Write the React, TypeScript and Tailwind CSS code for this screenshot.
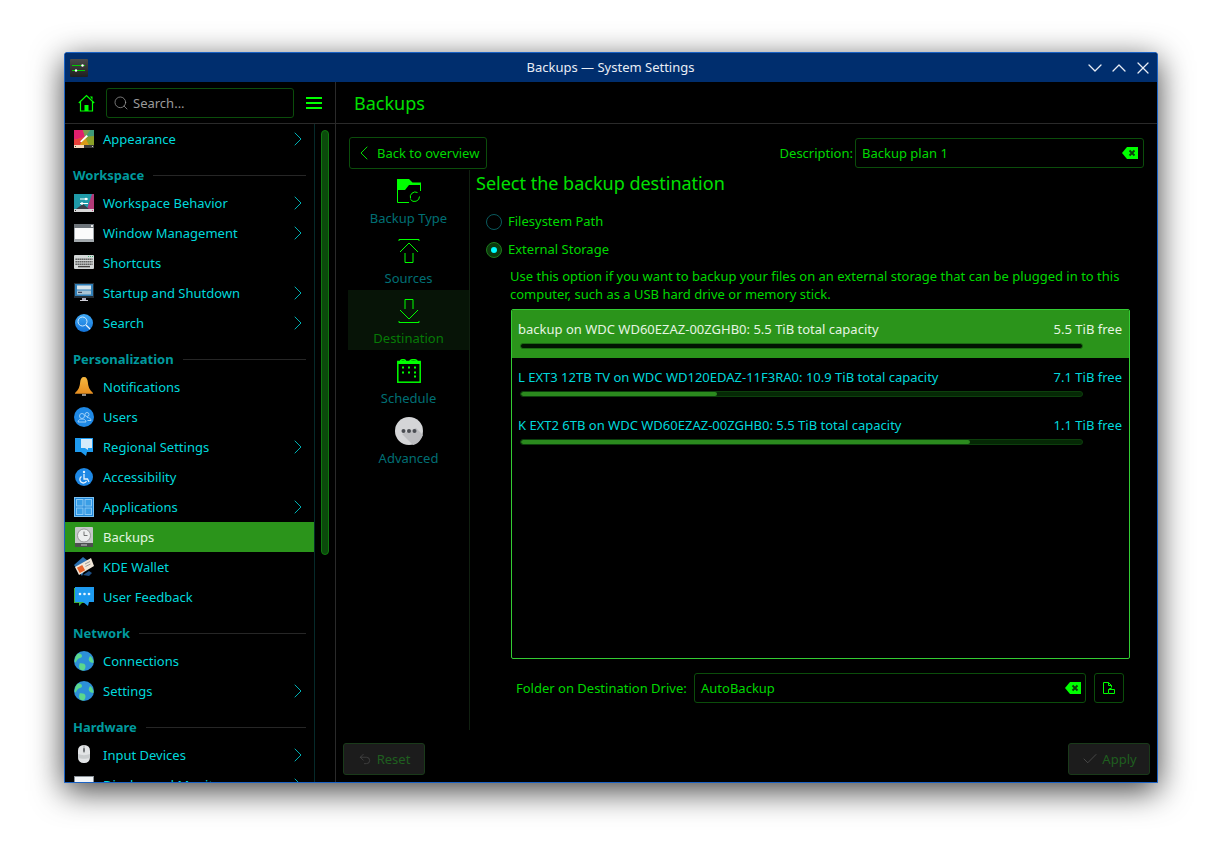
import type { ReactNode } from 'react'
import { ChevronLeft, ChevronRight, ChevronDown, ChevronUp, X, Search, Check, Undo2 } from 'lucide-react'

const FONT = "font-['Noto_Sans','Open_Sans',sans-serif]"

function IconBox({ children }: { children: ReactNode }) {
  return (
    <svg width="20" height="20" viewBox="0 0 20 20" className="shrink-0">
      {children}
    </svg>
  )
}

function AppearanceIcon() {
  return (
    <IconBox>
      <rect x="0" y="1" width="20" height="15" fill="#b8a020" />
      <path d="M0 1h9l2 7-11 3z" fill="#e0206e" />
      <path d="M0 11l11-3-5 8H0z" fill="#e8403a" />
      <path d="M6 16l5-8 4 8z" fill="#d89a18" />
      <path d="M15 16l-4-8 9-1v9z" fill="#8aa028" />
      <path d="M9 1h7l-5 7z" fill="#7a9a50" />
      <path d="M16 1h4v6l-9 1z" fill="#3f9a78" />
      <rect x="0" y="16" width="10" height="3" fill="#f6d8bc" />
      <rect x="10" y="16" width="10" height="3" fill="#3a3a3a" />
      <rect x="1" y="17" width="1" height="1" fill="#444" />
      <rect x="18" y="17" width="1" height="1" fill="#ccc" />
      <path d="M6 12.500l6.500-6.500 1.500 1.300-6.500 6z" fill="#fff" />
    </IconBox>
  )
}

function BehaviorIcon() {
  return (
    <IconBox>
      <rect x="0" y="1" width="20" height="15" fill="#1f9aa8" />
      <path d="M20 1v15h-7L18 1z" fill="#b33a78" />
      <path d="M2 16l7-5 6 5z" fill="#3a3d48" />
      <rect x="0" y="16" width="20" height="3" fill="#d8d8d8" />
      <rect x="1" y="17" width="1" height="1" fill="#333" />
      <rect x="18" y="17" width="1" height="1" fill="#d04a8a" />
      <path d="M6 6h8M6 10.500h8" stroke="#fff" strokeWidth="1" />
      <circle cx="12" cy="6" r="1.300" fill="#fff" />
      <circle cx="8" cy="10.500" r="1.300" fill="#fff" />
    </IconBox>
  )
}

function WindowIcon() {
  return (
    <IconBox>
      <rect x="0" y="1" width="20" height="18" fill="#a3a9ad" />
      <rect x="0" y="1" width="20" height="4" fill="#6d747a" />
      <rect x="17" y="2" width="2" height="2" fill="#e8e8e8" />
      <rect x="1" y="5" width="18" height="11" fill="#fbfbfb" />
    </IconBox>
  )
}

function KeyboardIcon() {
  return (
    <IconBox>
      <rect x="0" y="2" width="20" height="14" rx="1" fill="#d3d7d7" />
      <rect x="14" y="3" width="1" height="1" fill="#3cb371" />
      <rect x="16" y="3" width="1" height="1" fill="#3cb371" />
      <rect x="18" y="3" width="1" height="1" fill="#3cb371" />
      <path d="M1.500 6.200h17M1.500 8.700h17M1.500 11.200h17" stroke="#444" strokeWidth="1.400" strokeDasharray="1.300 .7" />
      <path d="M4 13.600h12" stroke="#444" strokeWidth="1.400" />
    </IconBox>
  )
}

function MonitorIcon() {
  return (
    <IconBox>
      <rect x="0" y="0" width="20" height="15" fill="#232c34" />
      <rect x="1" y="1" width="18" height="12" fill="#2f7fb8" />
      <rect x="3" y="2.500" width="14" height="4" fill="#d8e4ea" />
      <rect x="3" y="7.500" width="14" height="4" fill="#a9c4d4" />
      <rect x="4" y="8.800" width="4" height="1.200" fill="#445" />
      <rect x="8" y="15" width="4" height="2" fill="#aab" />
      <rect x="6" y="17" width="8" height="1" fill="#d0d0d8" />
    </IconBox>
  )
}

function SearchBadge() {
  return (
    <IconBox>
      <defs>
        <linearGradient id="sb" x1="0" y1="0" x2="0" y2="1">
          <stop offset="0" stopColor="#3ea8f5" />
          <stop offset="1" stopColor="#1272d8" />
        </linearGradient>
      </defs>
      <circle cx="10" cy="10" r="9" fill="url(#sb)" />
      <circle cx="8.500" cy="8.500" r="4.500" fill="none" stroke="#cfe9fc" strokeWidth="1" />
      <path d="M12 12l4 4" stroke="#e8f5ff" strokeWidth="1.300" />
    </IconBox>
  )
}

function BellIcon() {
  return (
    <IconBox>
      <defs>
        <linearGradient id="bl" x1="0" y1="0" x2="0" y2="1">
          <stop offset="0" stopColor="#f5b840" />
          <stop offset="1" stopColor="#e88f20" />
        </linearGradient>
      </defs>
      <path d="M10 0c-2.500 0-3.500 2-3.800 5-.3 4-1.500 8-5.200 11h18c-3.700-3-4.900-7-5.200-11C13.500 2 12.500 0 10 0z" fill="url(#bl)" />
      <rect x="1" y="16" width="18" height="1" fill="#a86a1c" />
      <rect x="8" y="17" width="4" height="2" fill="#8d8d8d" />
    </IconBox>
  )
}

function UsersIcon() {
  return (
    <IconBox>
      <circle cx="10" cy="10" r="10" fill="#1e88e5" />
      <circle cx="8" cy="9" r="2.500" fill="none" stroke="#9dd0f8" strokeWidth="1" />
      <circle cx="13" cy="7.500" r="2" fill="none" stroke="#9dd0f8" strokeWidth="1" />
      <path d="M4 15c0-2 2-3 4-3s4 1 4 3zM13 10.500c2 0 4 .8 4 3h-3.500" fill="none" stroke="#9dd0f8" strokeWidth="1" />
    </IconBox>
  )
}

function BubbleIcon() {
  return (
    <IconBox>
      <path d="M1 1h18v14h-6l-1 4-5-4H1z" fill="#1e9bf0" />
      <rect x="7" y="2" width="11" height="9" fill="#d6ebfa" />
      <path d="M11 11h3v2z" fill="#d6ebfa" />
    </IconBox>
  )
}

function AccessIcon() {
  return (
    <IconBox>
      <circle cx="10" cy="10" r="9" fill="#1e88e5" />
      <circle cx="10" cy="5" r="1.200" fill="#e6f3fd" />
      <path d="M10 7v5h3.500l1.500 3M7.500 9.500a3.500 3.500 0 1 0 5 4.500" fill="none" stroke="#e6f3fd" strokeWidth="1.300" />
    </IconBox>
  )
}

function AppsIcon() {
  return (
    <IconBox>
      <rect x="0" y="0" width="20" height="20" fill="#7cc2f2" />
      <rect x="1" y="1" width="18" height="18" fill="#1f86d8" />
      <rect x="2.500" y="2.500" width="6.500" height="6.500" fill="#3a9ee6" stroke="#8ccaf5" strokeWidth="1" />
      <rect x="11" y="2.500" width="6.500" height="6.500" fill="#3a9ee6" stroke="#8ccaf5" strokeWidth="1" />
      <rect x="2.500" y="11" width="6.500" height="6.500" fill="#3a9ee6" stroke="#8ccaf5" strokeWidth="1" />
      <rect x="11" y="11" width="6.500" height="6.500" fill="#3a9ee6" stroke="#8ccaf5" strokeWidth="1" />
    </IconBox>
  )
}

function DriveIcon() {
  return (
    <IconBox>
      <rect x="1" y="0" width="18" height="20" rx="1" fill="#c4c8c8" />
      <rect x="1" y="16" width="18" height="4" fill="#4d4f4f" />
      <circle cx="10" cy="8.500" r="6.500" fill="#eceeee" stroke="#808080" strokeWidth=".7" />
      <path d="M10 4.500v4h3.500" fill="none" stroke="#555" strokeWidth=".8" />
      <rect x="7" y="17.500" width="6" height="1" fill="#ccc" />
    </IconBox>
  )
}

function WalletIcon() {
  return (
    <IconBox>
      <path d="M0 8L9 0l5 4-6 15z" fill="#2a6fb0" />
      <path d="M15 14l3 2-3 3-6-1z" fill="#1c4f85" />
      <path d="M1 10L17 1l3 8L5 18z" fill="#f0e6d8" />
      <rect x="4" y="9" width="6" height="6" transform="rotate(-28 7 12)" fill="#e8642c" />
      <path d="M11 7l5-2.500M11.500 9.500l5-2.500" stroke="#888" strokeWidth=".8" />
    </IconBox>
  )
}

function FeedbackIcon() {
  return (
    <IconBox>
      <path d="M0 1h14v15H8l-3 3v-3H0z" fill="#3fae3f" />
      <path d="M1 0h19v15h-5l-1 4-5-4H1z" fill="#1e9bf0" />
      <circle cx="6" cy="7" r="1.300" fill="#e8f5ff" />
      <circle cx="10.500" cy="7" r="1.300" fill="#e8f5ff" />
      <circle cx="15" cy="7" r="1.300" fill="#e8f5ff" />
    </IconBox>
  )
}

function GlobeIcon() {
  return (
    <IconBox>
      <circle cx="10" cy="10" r="10" fill="#2c8fd8" />
      <path d="M4 2.500c2 0 4 .5 4 2.500s-2 1.500-4 3-1.500 4-3 3.500C0 10 1 5 4 2.500zM16 5c2 1 3.500 4 3.500 7l-2.500-.5c-1.500-1-3-2.500-2-4.500zM5.500 12.500c2-.5 6 0 6 2.500s-1 4.500-3 4.500c-1 0-3-1-3.500-3.500z" fill="#5cd88c" />
    </IconBox>
  )
}

function MouseIcon() {
  return (
    <IconBox>
      <rect x="4" y="0" width="12" height="18" rx="5.500" fill="#e2e4e6" />
      <path d="M10 0v8" stroke="#8a8d90" strokeWidth=".8" />
      <rect x="9" y="3" width="2" height="4" rx="1" fill="#6d7073" />
      <path d="M4 9c4 1.500 8 1.500 12 0v4c-3 1-9 1-12 0z" fill="#c9ccce" />
    </IconBox>
  )
}

function DisplayIcon() {
  return (
    <IconBox>
      <rect x="0" y="1" width="20" height="15" fill="#8a9198" />
      <rect x="1" y="2" width="18" height="13" fill="#f2f5f8" />
    </IconBox>
  )
}

function ClearIcon() {
  return (
    <svg width="16" height="12" viewBox="0 0 16 12" className="shrink-0">
      <path d="M5 0h11v12H5L0 6z" fill="#00ff00" />
      <path d="M7.500 3.500l5 5M12.500 3.500l-5 5" stroke="#0c3a0c" strokeWidth="1.800" />
    </svg>
  )
}

function SideRow({ icon, label, more, active }: { icon: ReactNode; label: string; more?: boolean; active?: boolean }) {
  return (
    <div className={`flex items-center h-[30px] pl-[9px] pr-[4px] ${active ? 'bg-[#2b941b] text-[#e2f5e0]' : 'text-[#00d8dc]'}`}>
      <span className="w-[29px] shrink-0 flex">{icon}</span>
      <span className="flex-1 whitespace-nowrap pt-[2px]">{label}</span>
      {more && <ChevronRight size={24} strokeWidth={1} className="text-[#00b0b4]" />}
    </div>
  )
}

function SideHeading({ title }: { title: string }) {
  return (
    <div className="h-[34px] pt-[8px] flex items-center gap-[9px] pl-[8px] pr-[8px]">
      <span className="font-bold text-[#009a9e] whitespace-nowrap pt-[2px]">{title}</span>
      <span className="flex-1 h-px bg-[#262626]" />
    </div>
  )
}

function Step({ icon, label, active }: { icon: ReactNode; label: string; active?: boolean }) {
  return (
    <div className={`h-[60px] flex flex-col items-center ${active ? 'bg-[#071407]' : ''}`}>
      <div className="h-[42px] shrink-0 flex items-center text-[#00ff00]">{icon}</div>
      <span className={`leading-[16px] -mt-[2px] ${active ? 'text-[#067a06]' : 'text-[#006f74]'}`}>{label}</span>
    </div>
  )
}

function DriveRow({ name, free, pct, selected }: { name: string; free: string; pct: number; selected?: boolean }) {
  return (
    <div className={`h-[48px] pl-[6px] pr-[7px] flex flex-col ${selected ? 'bg-[#2b941b] text-[#e6f5e2]' : 'text-[#00d8dc]'}`}>
      <div className="flex justify-between pt-[10px] leading-[18px]">
        <span>{name}</span>
        <span>{free}</span>
      </div>
      <div className={`mt-[5px] ml-[2px] w-[563px] h-[6px] rounded-full overflow-hidden border ${selected ? 'bg-[#0a3a08] border-[#1d6a14]' : 'bg-[#052805] border-[#0c3f0c]'}`}>
        <div className={`h-full rounded-full ${selected ? 'bg-[#021402]' : 'bg-[#2b8a1e]'}`} style={{ width: `${pct}%` }} />
      </div>
    </div>
  )
}

export default function App() {
  return (
    <div className={`${FONT} h-[859px] overflow-hidden bg-white pl-[64px] pt-[52px] text-[13px]`}>
      <div className="w-[1094px] h-[731px] flex flex-col bg-black border border-[#1a62c4] rounded-t-[3px] overflow-hidden shadow-[0_8px_32px_rgba(0,0,0,0.75)]">
        {/* Title bar */}
        <div className="h-[29px] shrink-0 bg-[#002e6e] flex items-center pl-[5px] pr-[2px] text-[#e8edf5]">
          <svg width="18" height="18" viewBox="0 0 18 18" className="shrink-0">
            <defs>
              <linearGradient id="tb" x1="0" y1="0" x2="0" y2="1">
                <stop offset="0" stopColor="#4a4a4a" />
                <stop offset="1" stopColor="#1f1f1f" />
              </linearGradient>
            </defs>
            <rect width="18" height="18" rx="1" fill="url(#tb)" />
            <path d="M2 6.500h13M2 11.500h13" stroke="#0c0" strokeWidth="1" />
            <circle cx="12.500" cy="6.500" r="1.200" fill="#fff" />
            <circle cx="6" cy="11.500" r="1.200" fill="#fff" />
          </svg>
          <span className="flex-1 text-center pl-[50px]">Backups — System Settings</span>
          <div className="flex items-center">
            <ChevronDown size={24} strokeWidth={1.3} />
            <ChevronUp size={24} strokeWidth={1.3} />
            <X size={20} strokeWidth={1.5} className="mx-[2px]" />
          </div>
        </div>

        <div className="flex-1 flex min-h-0">
          {/* Sidebar */}
          <div className="w-[271px] shrink-0 flex flex-col border-r border-[#2a2a2a]">
            <div className="h-[42px] shrink-0 flex items-center border-b border-[#2a2a2a] pl-[13px]">
              <svg width="17" height="18" viewBox="0 0 17 18" fill="none" stroke="#00ff00" strokeWidth="1.200" className="shrink-0">
                <path d="M.8 9L8.500 1.500 16.200 9M2.500 8v9h12V8" />
                <rect x="6.500" y="11" width="4" height="6" fill="#00ff00" stroke="none" />
                <path d="M12 2.500h2.500V6z" fill="#00ff00" stroke="none" />
              </svg>
              <div className="ml-[11px] w-[188px] h-[30px] rounded-[3px] border border-[#0b4d0b] flex items-center pl-[6px] text-[#9a9a9a]">
                <Search size={16} strokeWidth={1.1} className="text-[#a0a0a0]" />
                <span className="ml-[4px] pt-[2px]">Search...</span>
              </div>
              <div className="ml-[12px] w-[16px] flex flex-col gap-[3px]">
                <span className="h-[2px] bg-[#00ff00]" />
                <span className="h-[2px] bg-[#00ff00]" />
                <span className="h-[2px] bg-[#00ff00]" />
              </div>
            </div>
            <div className="flex-1 flex min-h-0 overflow-hidden">
              <div className="w-[250px] shrink-0 border-r border-[#062a2a]">
                <SideRow icon={<AppearanceIcon />} label="Appearance" more />
                <SideHeading title="Workspace" />
                <SideRow icon={<BehaviorIcon />} label="Workspace Behavior" more />
                <SideRow icon={<WindowIcon />} label="Window Management" more />
                <SideRow icon={<KeyboardIcon />} label="Shortcuts" />
                <SideRow icon={<MonitorIcon />} label="Startup and Shutdown" more />
                <SideRow icon={<SearchBadge />} label="Search" more />
                <SideHeading title="Personalization" />
                <SideRow icon={<BellIcon />} label="Notifications" />
                <SideRow icon={<UsersIcon />} label="Users" />
                <SideRow icon={<BubbleIcon />} label="Regional Settings" more />
                <SideRow icon={<AccessIcon />} label="Accessibility" />
                <SideRow icon={<AppsIcon />} label="Applications" more />
                <SideRow icon={<DriveIcon />} label="Backups" active />
                <SideRow icon={<WalletIcon />} label="KDE Wallet" />
                <SideRow icon={<FeedbackIcon />} label="User Feedback" />
                <SideHeading title="Network" />
                <SideRow icon={<GlobeIcon />} label="Connections" />
                <SideRow icon={<GlobeIcon />} label="Settings" more />
                <SideHeading title="Hardware" />
                <SideRow icon={<MouseIcon />} label="Input Devices" more />
                <SideRow icon={<DisplayIcon />} label="Display and Monitor" more />
              </div>
              <div className="flex-1 pt-[6px] pl-[6px]">
                <div className="w-[8px] h-[425px] rounded-full bg-[#0b4a0b] border border-[#0e7a0e]" />
              </div>
            </div>
          </div>

          {/* Main */}
          <div className="flex-1 flex flex-col min-w-0">
            <div className="h-[42px] shrink-0 border-b border-[#2a2a2a] flex items-center pl-[18px] text-[18px] text-[#00e000]">
              <span className="pt-[2px]">Backups</span>
            </div>

            <div className="flex-1 flex flex-col min-h-0 pl-[13px] pr-[13px] pt-[13px]">
              <div className="flex items-center h-[32px] mb-[1px] shrink-0 text-[#00d800]">
                <div className="w-[138px] h-[32px] rounded-[3px] border border-[#0b4d0b] flex items-center pl-[2px] gap-[1px]">
                  <ChevronLeft size={24} strokeWidth={1} className="text-[#00e000]" />
                  <span className="pt-[2px]">Back to overview</span>
                </div>
                <span className="flex-1 text-right pr-[2px] pt-[2px]">Description:</span>
                <div className="w-[289px] h-[30px] rounded-[3px] border border-[#0b4d0b] flex items-center justify-between pl-[6px] pr-[5px]">
                  <span className="pt-[2px]">Backup plan 1</span>
                  <ClearIcon />
                </div>
              </div>

              <div className="h-[560px] shrink-0 flex">
                {/* Steps */}
                <div className="w-[122px] shrink-0 border-r border-[#102010] -ml-px mr-[6px]">
                  <Step
                    label="Backup Type"
                    icon={
                      <svg width="24" height="24" viewBox="0 0 24 24" fill="none" stroke="#00ff00" strokeWidth="1">
                        <path d="M0 0H12L15.500 3.500H24V6H12L8 11H0Z" fill="#00ff00" stroke="none" />
                        <path d="M.5 10V23.500H12M23.500 4V12" />
                        <path d="M22.500 17.500a5 5 0 0 1-9 3M13.500 19.500a5 5 0 0 1 7-6" />
                      </svg>
                    }
                  />
                  <Step
                    label="Sources"
                    icon={
                      <svg width="22" height="24" viewBox="0 0 22 24" fill="none" stroke="#00ff00" strokeWidth="1">
                        <path d="M1 2V.5H21V2M2 13L11 4l9 9M7 14v9.500h8V14" />
                      </svg>
                    }
                  />
                  <Step
                    active
                    label="Destination"
                    icon={
                      <svg width="22" height="24" viewBox="0 0 22 24" fill="none" stroke="#00ff00" strokeWidth="1">
                        <path d="M7 10V.5h8V10M2 11l9 9 9-9M1 22v1.500H21V22" />
                      </svg>
                    }
                  />
                  <Step
                    label="Schedule"
                    icon={
                      <svg width="24" height="24" viewBox="0 0 24 24" fill="none" stroke="#00ff00" strokeWidth="1.500">
                        <rect x=".8" y="2.500" width="22.400" height="20.700" />
                        <path d="M.8 4h22.400" strokeWidth="2" />
                        <path d="M3.500 2c0-1.800 5-1.800 5 0M13 2c0-1.800 7-1.800 7 0" />
                        <path d="M5 7.500h2v2H5zM11 7.500h2v2h-2zM17 7.500h2v2h-2zM5 12.500h2v2H5zM11 12.500h2v2h-2zM17 12.500h2v2h-2zM17 16.500h2v2h-2z" fill="#00ff00" stroke="none" />
                      </svg>
                    }
                  />
                  <Step
                    label="Advanced"
                    icon={
                      <svg width="28" height="28" viewBox="0 0 28 28">
                        <circle cx="14" cy="14" r="14" fill="#d4d5d7" />
                        <path d="M7 17l11 11c5-1 8-5 10-10l-7-7z" fill="#bcbdc0" />
                        <circle cx="8.500" cy="14" r="2" fill="#4a4d52" />
                        <circle cx="14" cy="14" r="2" fill="#4a4d52" />
                        <circle cx="19.500" cy="14" r="2" fill="#4a4d52" />
                      </svg>
                    }
                  />
                </div>

                {/* Destination pane */}
                <div className="flex-1 min-w-0 flex flex-col text-[#00d800]">
                  <div className="text-[18px] leading-[26px] text-[#00e000]">Select the backup destination</div>
                  <div className="flex items-center h-[28px] mt-[12px] pl-[10px] gap-[6px]">
                    <span className="w-[16px] h-[16px] rounded-full border border-[#0a5a5e]" />
                    <span>Filesystem Path</span>
                  </div>
                  <div className="flex items-center h-[28px] pl-[10px] gap-[6px]">
                    <span className="w-[16px] h-[16px] rounded-full border border-[#1d7a1d] bg-[#0c3a0c] flex items-center justify-center">
                      <span className="w-[6px] h-[6px] rounded-full bg-[#00ffff]" />
                    </span>
                    <span>External Storage</span>
                  </div>
                  <p className="pl-[34px] pr-[10px] mt-[3px] leading-[18px]">
                    Use this option if you want to backup your files on an external storage that can be plugged in to this computer, such as a USB hard drive or memory stick.
                  </p>
                  <div className="ml-[35px] w-[619px] h-[350px] mt-[6px] shrink-0 rounded-[2px] border border-[#33cc33] overflow-hidden">
                    <DriveRow selected name="backup on WDC WD60EZAZ-00ZGHB0: 5.5 TiB total capacity" free="5.5 TiB free" pct={100} />
                    <DriveRow name="L EXT3 12TB TV on WDC WD120EDAZ-11F3RA0: 10.9 TiB total capacity" free="7.1 TiB free" pct={35} />
                    <DriveRow name="K EXT2 6TB on WDC WD60EZAZ-00ZGHB0: 5.5 TiB total capacity" free="1.1 TiB free" pct={80} />
                  </div>
                  <div className="flex items-center ml-[40px] mt-[14px] h-[30px] shrink-0">
                    <span className="w-[178px] shrink-0 whitespace-nowrap pt-[2px]">Folder on Destination Drive:</span>
                    <div className="w-[392px] h-[30px] rounded-[3px] border border-[#0b4d0b] flex items-center justify-between pl-[6px] pr-[4px]">
                      <span className="pt-[2px]">AutoBackup</span>
                      <ClearIcon />
                    </div>
                    <div className="ml-[8px] w-[30px] h-[30px] rounded-[3px] border border-[#0b4d0b] flex items-center justify-center">
                      <svg width="12" height="12" viewBox="0 0 12 12" fill="none" stroke="#00ff00" strokeWidth="1">
                        <path d="M5 11.500H.5V.5h5l3 3v2M5.500.5v3h3" />
                        <path d="M5.500 7.500h6v4h-6zM5.500 7.500l1-1h2" />
                      </svg>
                    </div>
                  </div>
                </div>
              </div>

              {/* Buttons */}
              <div className="flex justify-between -ml-[6px] -mr-[6px] mt-[13px]">
                <div className="w-[82px] h-[32px] rounded-[3px] bg-[#1c1c1c] border border-[#1a3a1a] flex items-center justify-center gap-[5px] text-[#1f5f1f]">
                  <Undo2 size={14} strokeWidth={1} className="text-[#555]" />
                  <span className="pt-[2px]">Reset</span>
                </div>
                <div className="w-[82px] h-[32px] rounded-[3px] bg-[#1c1c1c] border border-[#1a3a1a] flex items-center justify-center gap-[3px] text-[#1f5f1f]">
                  <Check size={18} strokeWidth={1} className="text-[#555]" />
                  <span className="pt-[2px]">Apply</span>
                </div>
              </div>
            </div>
          </div>
        </div>
      </div>
    </div>
  )
}
